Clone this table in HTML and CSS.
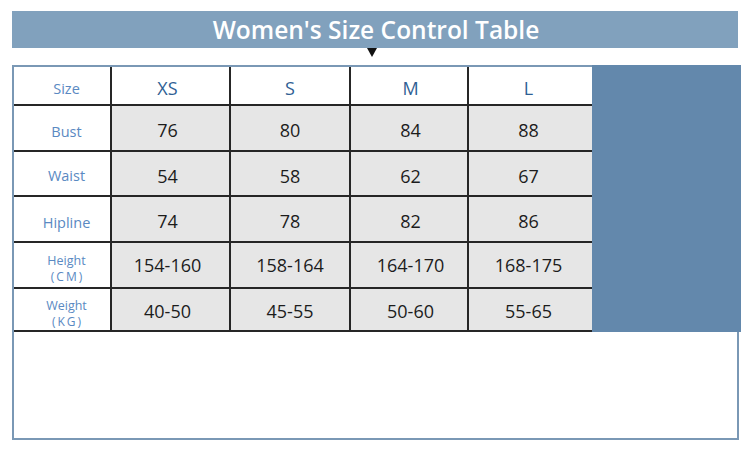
FILE: index.html
```html
<!DOCTYPE html>
<html lang="en">
<head>
<meta charset="utf-8">
<title>Women's Size Control Table</title>
<link rel="stylesheet" href="styles.css">
</head>
<body>
<div class="page">
  <header class="title-bar"><h1 class="title">Women's Size Control Table</h1></header>
  <div class="pointer-row"><span class="pointer"></span></div>
  <section class="frame">
    <div class="table">
      <div class="cell label head-label">Size</div>
      <div class="cell head c1">XS</div>
      <div class="cell head">S</div>
      <div class="cell head c3">M</div>
      <div class="cell head c4">L</div>
      <div class="side-block"></div>

      <div class="cell label r-bust">Bust</div>
      <div class="cell data r-bust c1">76</div>
      <div class="cell data r-bust">80</div>
      <div class="cell data r-bust c3">84</div>
      <div class="cell data r-bust c4">88</div>

      <div class="cell label r-waist">Waist</div>
      <div class="cell data r-waist c1">54</div>
      <div class="cell data r-waist">58</div>
      <div class="cell data r-waist c3">62</div>
      <div class="cell data r-waist c4">67</div>

      <div class="cell label r-hip">Hipline</div>
      <div class="cell data r-hip c1">74</div>
      <div class="cell data r-hip">78</div>
      <div class="cell data r-hip c3">82</div>
      <div class="cell data r-hip c4">86</div>

      <div class="cell label two-line r-height"><span class="main">Height</span><span class="unit">(CM)</span></div>
      <div class="cell data r-height c1">154-160</div>
      <div class="cell data r-height">158-164</div>
      <div class="cell data r-height c3">164-170</div>
      <div class="cell data r-height c4">168-175</div>

      <div class="cell label two-line r-weight"><span class="main">Weight</span><span class="unit">(KG)</span></div>
      <div class="cell data r-weight c1">40-50</div>
      <div class="cell data r-weight">45-55</div>
      <div class="cell data r-weight c3">50-60</div>
      <div class="cell data r-weight c4">55-65</div>
    </div>
  </section>
</div>
</body>
</html>
```
FILE: styles.css
```css
* { box-sizing: border-box; }
html, body { margin: 0; padding: 0; background: #ffffff; }
body {
  width: 750px;
  height: 458px;
  overflow: hidden;
  font-family: "Open Sans", "Liberation Sans", sans-serif;
}
.page {
  padding: 11px 0 0 12px;
}
.title-bar {
  width: 726px;
  height: 37px;
  background: #81a1bd;
  display: flex;
  align-items: center;
  justify-content: center;
}
.title {
  margin: 0 0 0 2px;
  font-weight: 600;
  font-size: 24.5px;
  line-height: 1;
  color: #ffffff;
  padding-top: 1px;
}
.pointer-row {
  height: 17px;
  padding-left: 355px;
}
.pointer {
  display: block;
  width: 0;
  height: 0;
  border-left: 5px solid transparent;
  border-right: 5px solid transparent;
  border-top: 9px solid #111111;
}
.frame {
  width: 727px;
  height: 375px;
  border: 2px solid #7a98b5;
}
.table {
  display: grid;
  grid-template-columns: 96px 119px 120px 118px 125px 1fr;
  grid-template-rows: 39px 46px 45px 46px 46px 43px;
}
.cell {
  display: flex;
  align-items: center;
  justify-content: center;
  border-bottom: 2px solid #262626;
  background: #e6e6e6;
}
.cell.head, .cell.data { border-left: 2px solid #262626; }
.cell.label, .cell.head { background: #ffffff; }
.label {
  color: #5a89c2;
  font-size: 14.5px;
  padding-top: 6px;
  padding-left: 9px;
}
.head {
  color: #2f5f94;
  font-size: 18px;
  padding-top: 5px;
}
.data {
  color: #1c1c1c;
  font-size: 18px;
  padding-top: 4px;
}
.c1 { padding-right: 6px; }
.c3 { padding-left: 3px; }
.c4 { padding-right: 4px; }
.r-waist.label { padding-top: 3px; }
.r-waist.data { padding-top: 4px; }
.r-hip.label { padding-top: 7px; }
.r-hip.data { padding-top: 3px; }
.r-height.data { padding-top: 0; }
.r-weight.data { padding-top: 2px; }
.two-line {
  flex-direction: column;
  padding-top: 7px;
}
.two-line .main {
  font-size: 12.5px;
  line-height: 16px;
}
.two-line .unit {
  font-size: 12px;
  line-height: 16px;
  letter-spacing: 2px;
  margin-left: 2px;
}
.r-weight.two-line { padding-top: 8px; }
.side-block {
  grid-column: 6;
  grid-row: 1 / span 6;
  background: #6388ac;
  margin-top: -2px;
  margin-right: -4px;
}
```
